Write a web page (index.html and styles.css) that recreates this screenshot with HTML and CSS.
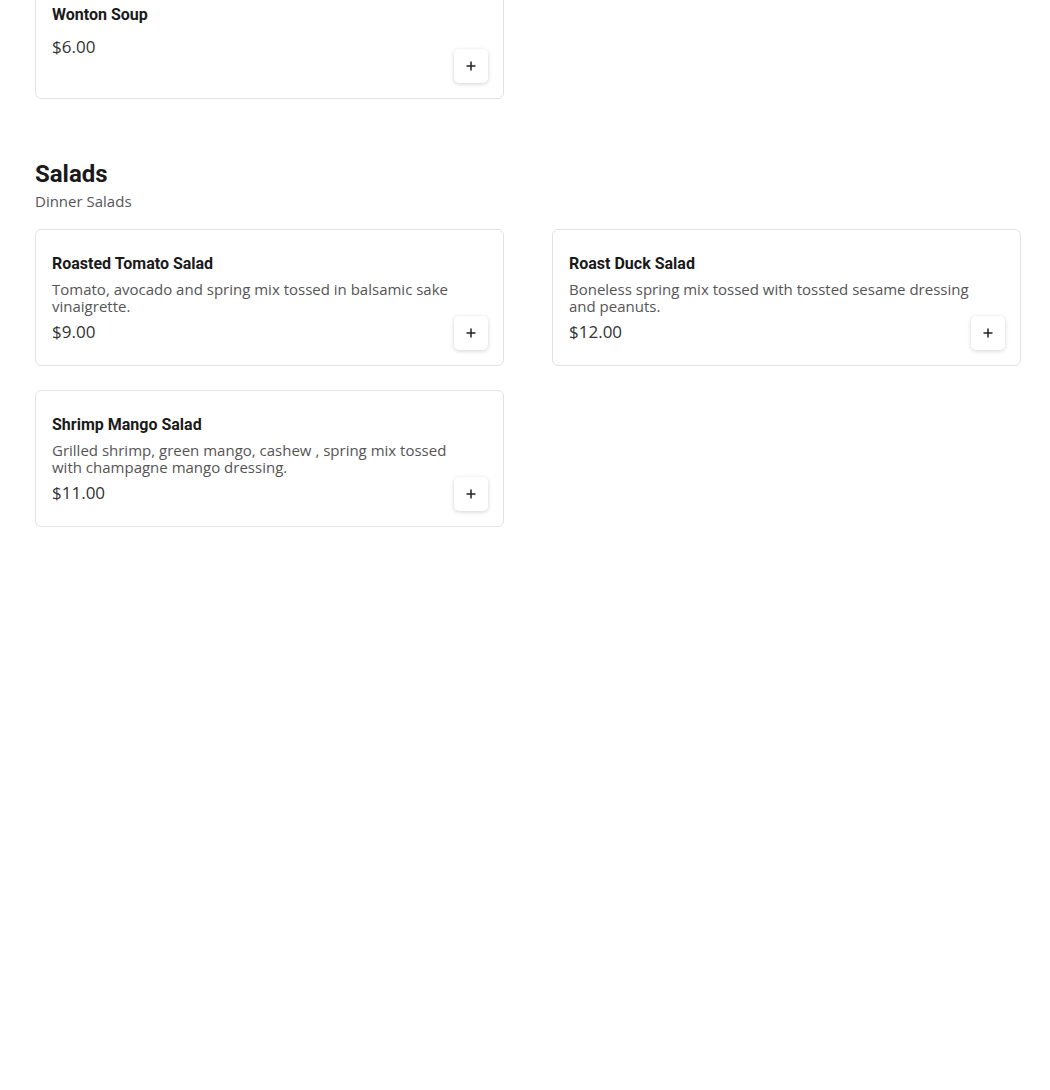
FILE: index.html
```
<!DOCTYPE html>
<html lang="en">

<head>
    <meta charset="UTF-8">
    <meta name="viewport" content="width=device-width, initial-scale=1.0">
    <title>Menu</title>
    <link rel="stylesheet" href="styles.css">
</head>

<body>
    <div class="menu">
        <!-- Soups (scrolled, only the last item shows) -->
        <section class="category category-first">
            <div class="items">
                <div class="item">
                    <div class="item-info">
                        <h3 class="item-name">Wonton Soup</h3>
                        <div class="item-price">$6.00</div>
                    </div>
                    <button class="add-btn" aria-label="Add Wonton Soup">
                        <svg width="12" height="12" viewBox="0 0 12 12"><path d="M6 1.5v9M1.5 6h9" stroke="#222" stroke-width="1.5" fill="none"/></svg>
                    </button>
                </div>
            </div>
        </section>

        <section class="category">
            <h2 class="category-title">Salads</h2>
            <p class="category-desc">Dinner Salads</p>
            <div class="items">
                <div class="item">
                    <div class="item-info">
                        <h3 class="item-name">Roasted Tomato Salad</h3>
                        <p class="item-desc">Tomato, avocado and spring mix tossed in balsamic sake vinaigrette.</p>
                        <div class="item-price">$9.00</div>
                    </div>
                    <button class="add-btn" aria-label="Add Roasted Tomato Salad">
                        <svg width="12" height="12" viewBox="0 0 12 12"><path d="M6 1.5v9M1.5 6h9" stroke="#222" stroke-width="1.5" fill="none"/></svg>
                    </button>
                </div>
                <div class="item">
                    <div class="item-info">
                        <h3 class="item-name">Roast Duck Salad</h3>
                        <p class="item-desc">Boneless spring mix tossed with tossted sesame dressing and peanuts.</p>
                        <div class="item-price">$12.00</div>
                    </div>
                    <button class="add-btn" aria-label="Add Roast Duck Salad">
                        <svg width="12" height="12" viewBox="0 0 12 12"><path d="M6 1.5v9M1.5 6h9" stroke="#222" stroke-width="1.5" fill="none"/></svg>
                    </button>
                </div>
                <div class="item">
                    <div class="item-info">
                        <h3 class="item-name">Shrimp Mango Salad</h3>
                        <p class="item-desc">Grilled shrimp, green mango, cashew , spring mix tossed with champagne mango dressing.</p>
                        <div class="item-price">$11.00</div>
                    </div>
                    <button class="add-btn" aria-label="Add Shrimp Mango Salad">
                        <svg width="12" height="12" viewBox="0 0 12 12"><path d="M6 1.5v9M1.5 6h9" stroke="#222" stroke-width="1.5" fill="none"/></svg>
                    </button>
                </div>
            </div>
        </section>
    </div>
</body>

</html>
```

FILE: styles.css
```
body {
    margin: 0;
    padding: 0;
    background-color: #fff;
    font-family: "Open Sans", "Liberation Sans", sans-serif;
    color: #333;
}

.menu {
    width: 986px;
    margin-left: 35px;
}

.category {
    margin-top: 61px;
}

/* page is scrolled: the top of the first card is cut off */
.category-first {
    margin-top: -38px;
}

.category-title {
    font-family: Roboto, "Liberation Sans", sans-serif;
    font-size: 24px;
    font-weight: 700;
    line-height: 28px;
    color: #1a1a1a;
    margin: 0;
}

.category-desc {
    font-size: 15px;
    line-height: 17px;
    color: #555;
    margin: 5px 0 0;
}

.category-desc + .items {
    margin-top: 19px;
}

.items {
    display: grid;
    grid-template-columns: 1fr 1fr;
    column-gap: 48px;
    row-gap: 24px;
}

.item {
    display: flex;
    align-items: center;
    min-height: 137px;
    box-sizing: border-box;
    padding: 0 15px 0 16px;
    border: 1px solid #e2e2e2;
    border-radius: 6px;
    background-color: #fff;
}

.item-info {
    flex: 1;
    min-width: 0;
    padding: 23px 0 21px;
}

.item-name {
    font-family: Roboto, "Liberation Sans", sans-serif;
    font-size: 16px;
    font-weight: 700;
    line-height: 22px;
    color: #1a1a1a;
    margin: 0 0 6px;
}

/* text may run over the button column, the button sits at the bottom */
.item-desc {
    font-size: 15px;
    line-height: 17px;
    color: #555;
    margin: 0 -14px 0 0;
}

.item-price {
    font-size: 17px;
    line-height: 24px;
    color: #333;
    margin-top: 5px;
}

/* no description */
.item-name + .item-price {
    margin-top: 9px;
}

.add-btn {
    align-self: flex-end;
    flex-shrink: 0;
    width: 34px;
    height: 34px;
    margin-bottom: 15px;
    padding: 0;
    display: flex;
    align-items: center;
    justify-content: center;
    background-color: #fff;
    border: none;
    border-radius: 5px;
    box-shadow: 0 1px 4px rgba(0, 0, 0, 0.18);
    cursor: pointer;
}
```
